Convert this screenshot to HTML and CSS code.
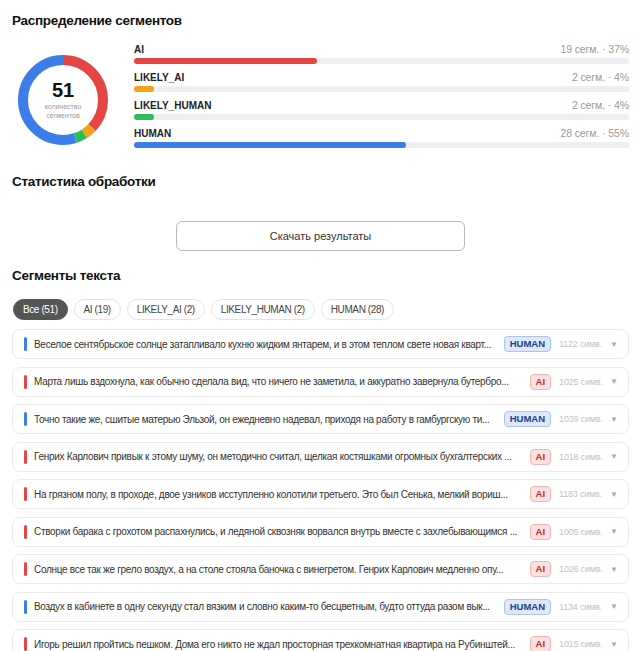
FILE: index.html
```html
<!DOCTYPE html>
<html lang="ru">
<head>
    <meta charset="UTF-8">
    <meta name="viewport" content="width=device-width, initial-scale=1.0">
    <title>Результаты анализа</title>
    <link rel="stylesheet" href="styles.css">
</head>
<body>

    <section class="block">
        <h2>Распределение сегментов</h2>
        <div class="dist">
            <div class="donut">
                <!-- circumference for r=40 is 251.33 -->
                <svg viewBox="0 0 90 90" width="90" height="90">
                    <g transform="rotate(-90 45 45)" fill="none" stroke-width="10">
                        <circle cx="45" cy="45" r="40" stroke="#e64545" stroke-dasharray="93 251.33"/>
                        <circle cx="45" cy="45" r="40" stroke="#f3a01c" stroke-dasharray="10.05 251.33" stroke-dashoffset="-93"/>
                        <circle cx="45" cy="45" r="40" stroke="#2bbd5c" stroke-dasharray="10.05 251.33" stroke-dashoffset="-103.05"/>
                        <circle cx="45" cy="45" r="40" stroke="#3b7de9" stroke-dasharray="138.23 251.33" stroke-dashoffset="-113.1"/>
                    </g>
                </svg>
                <div class="donut-center">
                    <div class="donut-num">51</div>
                    <div class="donut-cap">количество<br>сегментов</div>
                </div>
            </div>
            <div class="bars">
                <div class="bar-row">
                    <div class="bar-head"><b>AI</b><span>19 сегм. · 37%</span></div>
                    <div class="track"><div class="fill fill-ai" style="width: 37%"></div></div>
                </div>
                <div class="bar-row">
                    <div class="bar-head"><b>LIKELY_AI</b><span>2 сегм. · 4%</span></div>
                    <div class="track"><div class="fill fill-lai" style="width: 4%"></div></div>
                </div>
                <div class="bar-row">
                    <div class="bar-head"><b>LIKELY_HUMAN</b><span>2 сегм. · 4%</span></div>
                    <div class="track"><div class="fill fill-lhuman" style="width: 4%"></div></div>
                </div>
                <div class="bar-row">
                    <div class="bar-head"><b>HUMAN</b><span>28 сегм. · 55%</span></div>
                    <div class="track"><div class="fill fill-human" style="width: 55%"></div></div>
                </div>
            </div>
        </div>
    </section>

    <section class="block">
        <h2>Статистика обработки</h2>
        <div class="download">
            <button class="btn-download">Скачать результаты</button>
        </div>
    </section>

    <section class="block">
        <h2>Сегменты текста</h2>
        <div class="filters">
            <button class="chip active">Все (51)</button>
            <button class="chip">AI (19)</button>
            <button class="chip">LIKELY_AI (2)</button>
            <button class="chip">LIKELY_HUMAN (2)</button>
            <button class="chip">HUMAN (28)</button>
        </div>

        <div class="segments">
            <div class="seg">
                <i class="mark mark-human"></i>
                <span class="seg-text">Веселое сентябрьское солнце затапливало кухню жидким янтарем, и в этом теплом свете новая кварт...</span>
                <span class="badge badge-human">HUMAN</span>
                <span class="seg-len">1122 симв.</span>
                <span class="arrow">▼</span>
            </div>
            <div class="seg">
                <i class="mark mark-ai"></i>
                <span class="seg-text">Марта лишь вздохнула, как обычно сделала вид, что ничего не заметила, и аккуратно завернула бутербро...</span>
                <span class="badge badge-ai">AI</span>
                <span class="seg-len">1025 симв.</span>
                <span class="arrow">▼</span>
            </div>
            <div class="seg">
                <i class="mark mark-human"></i>
                <span class="seg-text">Точно такие же, сшитые матерью Эльзой, он ежедневно надевал, приходя на работу в гамбургскую ти...</span>
                <span class="badge badge-human">HUMAN</span>
                <span class="seg-len">1039 симв.</span>
                <span class="arrow">▼</span>
            </div>
            <div class="seg">
                <i class="mark mark-ai"></i>
                <span class="seg-text">Генрих Карлович привык к этому шуму, он методично считал, щелкая костяшками огромных бухгалтерских ...</span>
                <span class="badge badge-ai">AI</span>
                <span class="seg-len">1018 симв.</span>
                <span class="arrow">▼</span>
            </div>
            <div class="seg">
                <i class="mark mark-ai"></i>
                <span class="seg-text">На грязном полу, в проходе, двое узников исступленно колотили третьего. Это был Сенька, мелкий вориш...</span>
                <span class="badge badge-ai">AI</span>
                <span class="seg-len">1183 симв.</span>
                <span class="arrow">▼</span>
            </div>
            <div class="seg">
                <i class="mark mark-ai"></i>
                <span class="seg-text">Створки барака с грохотом распахнулись, и ледяной сквозняк ворвался внутрь вместе с захлебывающимся ...</span>
                <span class="badge badge-ai">AI</span>
                <span class="seg-len">1005 симв.</span>
                <span class="arrow">▼</span>
            </div>
            <div class="seg">
                <i class="mark mark-ai"></i>
                <span class="seg-text">Солнце все так же грело воздух, а на столе стояла баночка с винегретом. Генрих Карлович медленно опу...</span>
                <span class="badge badge-ai">AI</span>
                <span class="seg-len">1026 симв.</span>
                <span class="arrow">▼</span>
            </div>
            <div class="seg">
                <i class="mark mark-human"></i>
                <span class="seg-text">Воздух в кабинете в одну секунду стал вязким и словно каким-то бесцветным, будто оттуда разом вык...</span>
                <span class="badge badge-human">HUMAN</span>
                <span class="seg-len">1134 симв.</span>
                <span class="arrow">▼</span>
            </div>
            <div class="seg">
                <i class="mark mark-ai"></i>
                <span class="seg-text">Игорь решил пройтись пешком. Дома его никто не ждал просторная трехкомнатная квартира на Рубинштей...</span>
                <span class="badge badge-ai">AI</span>
                <span class="seg-len">1015 симв.</span>
                <span class="arrow">▼</span>
            </div>
        </div>
    </section>

</body>
</html>
```

FILE: styles.css
```css
body {
    font-family: "Liberation Sans", Arial, sans-serif;
    background: #fff;
    color: #222;
    margin: 0;
    padding: 12px 11px 0 12px;
}

h2 {
    font-size: 13.5px;
    font-weight: bold;
    letter-spacing: -0.3px;
    color: #111;
    margin: 0;
    line-height: 18px;
}

/* distribution: donut + bars */
.dist {
    display: flex;
    align-items: flex-start;
    gap: 26px;
    padding: 12px 0 0 6px;
    height: 131px;
}

.donut {
    position: relative;
    width: 90px;
    height: 90px;
    margin-top: 13px;
    flex-shrink: 0;
}

.donut svg { display: block; }

.donut-center {
    position: absolute;
    inset: 0;
    display: flex;
    flex-direction: column;
    align-items: center;
    justify-content: center;
    text-align: center;
}

.donut-num {
    font-size: 20px;
    font-weight: bold;
    line-height: 20px;
    color: #111;
}

.donut-cap {
    font-size: 7px;
    line-height: 9px;
    color: #999;
    margin-top: 2px;
}

.bars {
    flex: 1;
    display: flex;
    flex-direction: column;
    gap: 7px;
    padding-top: 1px;
}

.bar-head {
    display: flex;
    justify-content: space-between;
    align-items: baseline;
    height: 12px;
    line-height: 12px;
}

.bar-head b {
    font-size: 10px;
    color: #222;
}

.bar-head span {
    font-size: 10.5px;
    letter-spacing: -0.1px;
    color: #999;
}

.track {
    height: 6px;
    border-radius: 3px;
    background: #efefef;
    margin-top: 3px;
}

.fill {
    height: 100%;
    border-radius: 3px;
}

.fill-ai { background: #e64545; }
.fill-lai { background: #f3a01c; }
.fill-lhuman { background: #2bbd5c; }
.fill-human { background: #3b7de9; }

/* download */
.download {
    display: flex;
    justify-content: center;
    padding: 30px 0 16px;
}

.btn-download {
    width: 289px;
    height: 30px;
    border: 1px solid #b9b9b9;
    border-radius: 6px;
    background: #fff;
    font-family: inherit;
    font-size: 11px;
    color: #333;
}

/* filters */
.filters {
    display: flex;
    gap: 6px;
    padding: 14px 0 9px 1px;
}

.chip {
    height: 21px;
    padding: 0 9px;
    border: 1px solid #e3e3e3;
    border-radius: 11px;
    background: #fff;
    font-family: inherit;
    font-size: 10px;
    color: #444;
    letter-spacing: -0.4px;
}

.chip.active {
    background: #555;
    border-color: #555;
    color: #fff;
}

/* segment list */
.segments {
    display: flex;
    flex-direction: column;
    gap: 7.5px;
}

.seg {
    display: flex;
    align-items: center;
    height: 30px;
    box-sizing: border-box;
    border: 1px solid #ebebeb;
    border-radius: 8px;
    padding: 0 10px 0 11px;
}

.mark {
    width: 3px;
    height: 14px;
    border-radius: 2px;
    flex-shrink: 0;
    margin-right: 7px;
}

.mark-ai { background: #e64545; }
.mark-human { background: #3b7de9; }

.seg-text {
    flex: 1;
    min-width: 0;
    font-size: 10px;
    color: #333;
    white-space: nowrap;
    overflow: hidden;
    text-overflow: ellipsis;
    letter-spacing: -0.3px;
}

.badge {
    flex-shrink: 0;
    height: 16px;
    line-height: 14px;
    box-sizing: border-box;
    padding: 0 5px;
    border-radius: 4px;
    font-size: 9.5px;
    font-weight: bold;
    margin-left: 9px;
}

.badge-human {
    background: #dde9fb;
    border: 1px solid #a9c6ef;
    color: #23408e;
}

.badge-ai {
    background: #fde1e1;
    border: 1px solid #f3b3b3;
    color: #c62d2d;
}

.seg-len {
    flex-shrink: 0;
    font-size: 9px;
    color: #c2c2c2;
    margin-left: 8px;
    width: 46px;
    letter-spacing: -0.2px;
}

.arrow {
    flex-shrink: 0;
    font-size: 8px;
    color: #aaa;
    margin-left: 5px;
}
```
